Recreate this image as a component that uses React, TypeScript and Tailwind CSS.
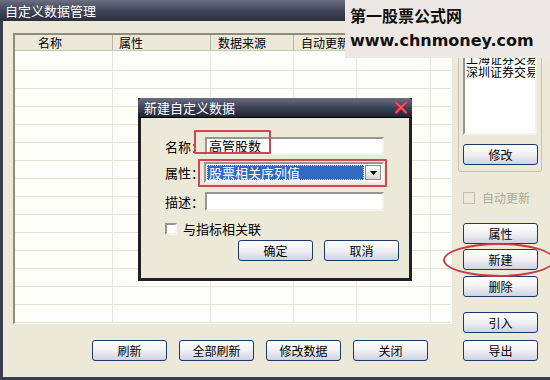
import React from "react"

const cjk = { fontFamily: '"Noto Sans CJK SC", "Liberation Sans", sans-serif' }

// ─── XP style push button ───────────────────────────────────────────────────
function XpButton({ label, className = "" }: { label: string; className?: string }) {
  return (
    <div className={`h-[21px] w-[75px] shrink-0 rounded-[3px] border border-[#1d3a66] bg-linear-to-b from-white via-[#f1f1f4] to-[#cfd2de] flex items-center justify-center text-[12px] text-black leading-none ${className}`}>
      {label}
    </div>
  )
}

const cols = [98, 98, 83, 63, 74, 21]
const headers = ["名称", "属性", "数据来源", "自动更新", "", ""]
const headerPad = [23, 6, 7, 7, 7, 7]

function ListView() {
  const rows = Array.from({ length: 15 })
  return (
    <div className="w-[439px] h-[291px] border-l-2 border-t-2 border-[#8e8b80] border-r border-b border-r-white border-b-white bg-[#fefef9] overflow-hidden">
      <div className="flex h-[16px] bg-[#ece9d8] border-b border-[#c9c6b6]">
        {cols.map((w, i) => (
          <div key={i} style={{ width: w, paddingLeft: headerPad[i] }}
            className="h-full border-r border-[#b9b6a6] text-[12px] leading-[16px] text-black whitespace-nowrap overflow-hidden shrink-0">
            {headers[i]}
          </div>
        ))}
      </div>
      {rows.map((_, r) => (
        <div key={r} className={`flex border-b border-[#e6e4d9] ${r === 0 ? "h-[20px]" : "h-[18px]"}`}>
          {cols.map((w, i) => (
            <div key={i} style={{ width: w }} className="h-full border-r border-[#ebe9df] shrink-0" />
          ))}
        </div>
      ))}
    </div>
  )
}

// ─── Dialog: 新建自定义数据 ─────────────────────────────────────────────────
function NewDataDialog() {
  return (
    <div className="absolute left-[138px] top-[98px] w-[274px] h-[183px] border-[3px] border-t-0 border-[#202024] bg-[#ece9d8] flex flex-col">
      <div className="h-[20px] -mx-[3px] bg-linear-to-b from-[#6a6e82] via-[#3e4256] to-[#202331] border-b border-black flex items-center justify-between pl-[6px] pr-[4px] rounded-t-[4px]">
        <span className="text-white text-[13px] leading-none">新建自定义数据</span>
        <svg width="14" height="13" viewBox="0 0 14 13">
          <path d="M2 1.5 L12 11.5 M12 1.5 L2 11.5" stroke="#e0303a" strokeWidth="2.6" strokeLinecap="round" />
          <path d="M2 1.5 L12 11.5 M12 1.5 L2 11.5" stroke="#ff8a8a" strokeWidth="0.8" strokeLinecap="round" />
        </svg>
      </div>
      <div className="relative flex flex-col pl-[24px] pr-[25px]">
        <div className="flex items-center mt-[19px] h-[18px]">
          <span className="w-[40px] text-[13px] leading-none">名称：</span>
          <div className="flex-1 h-[18px] border-2 border-t-[#98968c] border-l-[#98968c] border-r-[#f4f3ee] border-b-[#f4f3ee] bg-white text-[13px] leading-[14px] pl-[2px]">高管股数</div>
        </div>
        <div className="flex items-center mt-[7px] h-[21px]">
          <span className="w-[39px] text-[13px] leading-none">属性：</span>
          <div className="flex-1 h-[21px] border-2 border-t-[#98968c] border-l-[#98968c] border-r-[#f4f3ee] border-b-[#f4f3ee] bg-white flex items-center p-[1px]">
            <div className="flex-1 h-full bg-[#316ac5] text-white text-[13px] leading-[15px] pl-[2px] outline-1 outline-dotted outline-[#c8d4ee] -outline-offset-1">股票相关序列值</div>
            <div className="w-[16px] h-full ml-[1px] bg-linear-to-b from-white to-[#d9d7cf] border border-[#8d8b82] flex items-center justify-center">
              <svg width="7" height="4" viewBox="0 0 7 4"><path d="M0 0 H7 L3.5 4 Z" fill="#000" /></svg>
            </div>
          </div>
        </div>
        <div className="flex items-center mt-[9px] h-[19px]">
          <span className="w-[40px] text-[13px] leading-none">描述：</span>
          <div className="flex-1 h-[19px] border-2 border-t-[#98968c] border-l-[#98968c] border-r-[#f4f3ee] border-b-[#f4f3ee] bg-white" />
        </div>
        <div className="flex items-center mt-[11px] h-[13px]">
          <div className="w-[12px] h-[12px] border-2 border-t-[#98968c] border-l-[#98968c] border-r-[#f4f3ee] border-b-[#f4f3ee] bg-white" />
          <span className="ml-[6px] text-[13px] leading-none">与指标相关联</span>
        </div>
        <div className="flex mt-[5px] pl-[73px] gap-[11px] -mr-[25px]">
          <XpButton label="确定" />
          <XpButton label="取消" />
        </div>
        {/* red marks drawn over the screenshot */}
        <div className="absolute left-[53px] top-[12px] w-[77px] h-[24px] border-2 border-[#cf4552] rounded-[1px]" />
        <div className="absolute left-[57px] top-[41px] w-[189px] h-[28px] border-2 border-[#cf4552] rounded-[1px]" />
      </div>
    </div>
  )
}

export default function App() {
  return (
    <div style={cjk} className="relative w-[550px] h-[380px] overflow-hidden bg-[#ece9d8] text-black">
      <div className="h-[21px] bg-linear-to-b from-[#6b6f82] via-[#42465a] to-[#2b2e3e] flex items-center pl-[5px]">
        <span className="text-white text-[13px] leading-none">自定义数据管理</span>
      </div>
      <div className="flex h-[356px] border-l-[3px] border-[#3b3e50]">
        {/* left column */}
        <div className="flex flex-col pl-[10px] pt-[12px]">
          <ListView />
          <div className="flex mt-[16px] ml-[79px] gap-[12px]">
            <XpButton label="刷新" />
            <XpButton label="全部刷新" />
            <XpButton label="修改数据" />
            <XpButton label="关闭" />
          </div>
        </div>
        {/* right column */}
        <div className="flex flex-col pl-[6px]">
          <div className="mt-[7px] w-[84px] h-[144px] border border-[#c7c3b2] rounded-[3px] flex flex-col pl-[4px]">
            <div className="mt-[6px] w-[74px] h-[100px] border-2 border-t-[#98968c] border-l-[#98968c] border-r-[#f4f3ee] border-b-[#f4f3ee] bg-white overflow-hidden text-[12px] leading-[13px] whitespace-nowrap pt-[2px] pl-[1px]">
              <div>系统数据</div>
              <div>上海证券交易所</div>
              <div>深圳证券交易所</div>
            </div>
            <XpButton label="修改" className="mt-[9px] w-[74px]" />
          </div>
          <div className="flex items-center mt-[19px] ml-[5px] h-[13px]">
            <div className="w-[12px] h-[12px] border border-[#c2bfb2] bg-[#ece9d8]" />
            <span className="ml-[7px] text-[12px] leading-none text-[#aca899]">自动更新</span>
          </div>
          <XpButton label="属性" className="mt-[19px] ml-[5px] w-[74px]" />
          <XpButton label="新建" className="mt-[5px] ml-[5px] w-[74px]" />
          <XpButton label="删除" className="mt-[6px] ml-[5px] w-[74px]" />
          <XpButton label="引入" className="mt-[15px] ml-[5px] w-[74px]" />
          <XpButton label="导出" className="mt-[7px] ml-[5px] w-[74px]" />
        </div>
      </div>
      <div className="h-[3px] bg-[#3b3e50]" />

      <NewDataDialog />

      {/* red ellipse around 新建 */}
      <div className="absolute left-[443px] top-[243px] w-[112px] h-[34px] rounded-[50%] border-2 border-[#c23d4a]" />

      {/* watermark */}
      <div className="absolute left-[345px] top-0 w-[205px] h-[58px] bg-[#ede8e3] pl-[5px] pt-[4px] flex flex-col">
        <span className="text-[16px] leading-[22px] font-bold text-[#111]">第一股票公式网</span>
        <span style={{ fontFamily: '"DejaVu Sans", sans-serif' }} className="mt-[5px] text-[16px] leading-[20px] font-bold text-[#111]">www.chnmoney.com</span>
      </div>
    </div>
  )
}
